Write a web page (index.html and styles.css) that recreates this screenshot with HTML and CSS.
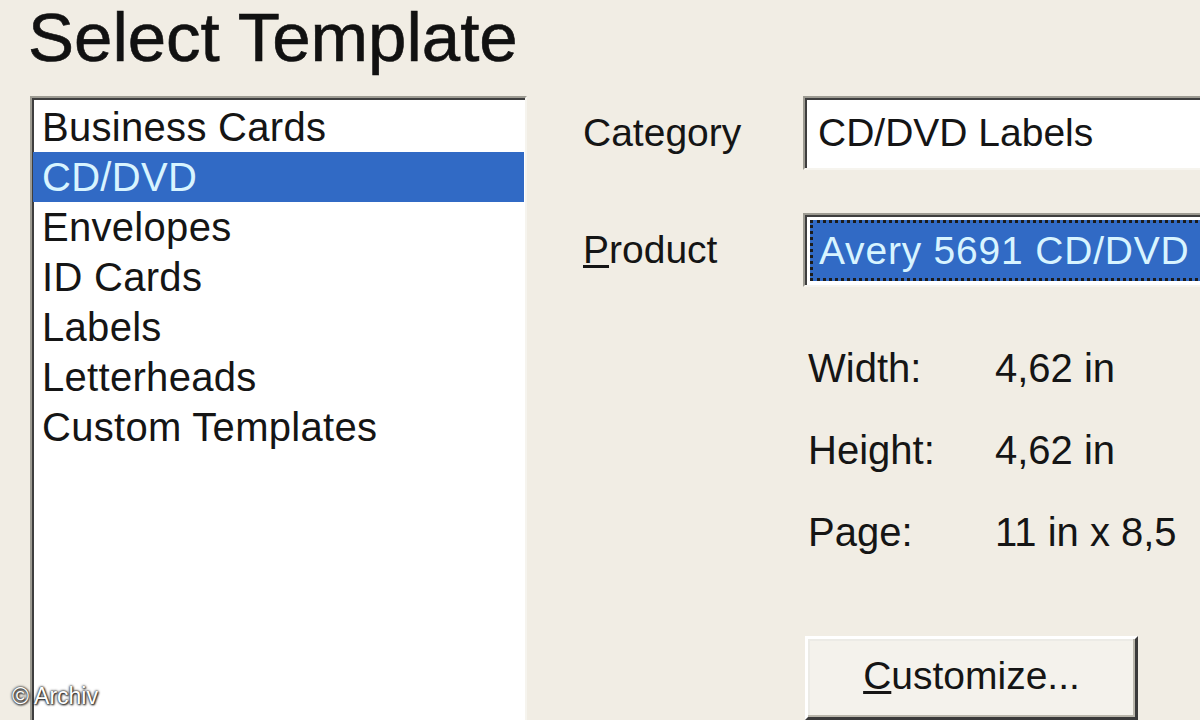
FILE: index.html
```html
<!DOCTYPE html>
<html lang="en">
<head>
    <meta charset="utf-8" />
    <meta name="viewport" content="width=device-width, initial-scale=1.0">
    <link rel="stylesheet" href="styles.css">
    <title>Select Template</title>
</head>
<body>
    <div class="dialog">
        <h1 class="title">Select Template</h1>

        <div class="main">
            <ul class="listbox">
                <li>Business Cards</li>
                <li class="selected">CD/DVD</li>
                <li>Envelopes</li>
                <li>ID Cards</li>
                <li>Labels</li>
                <li>Letterheads</li>
                <li>Custom Templates</li>
            </ul>

            <div class="panel">
                <div class="fields">
                    <label class="field-label">Category</label>
                    <div class="field">CD/DVD Labels</div>

                    <label class="field-label"><u>P</u>roduct</label>
                    <div class="field">
                        <span class="focus">Avery 5691 CD/DVD</span>
                    </div>
                </div>

                <div class="specs">
                    <span>Width:</span><span>4,62 in</span>
                    <span>Height:</span><span>4,62 in</span>
                    <span>Page:</span><span>11 in x 8,5</span>
                </div>

                <button class="customize" type="button"><u>C</u>ustomize...</button>
            </div>
        </div>

        <div class="credit">&copy; Archiv</div>
    </div>
</body>
</html>
```

FILE: styles.css
```css
body {
    margin: 0;
    background-color: #f1ede4;
    font-family: 'Liberation Sans', Arial, sans-serif;
    color: #151515;
    overflow: hidden;
}

.dialog {
    position: relative;
    width: 1200px;
    height: 720px;
    overflow: hidden;
}

.title {
    margin: 0;
    padding-left: 28px;
    font-size: 69px;
    font-weight: normal;
    line-height: 76px;
    color: #111;
    -webkit-text-stroke: 0.6px #111;
}

.main {
    display: flex;
    margin-top: 20px;
}

/* list on the left */
.listbox {
    list-style: none;
    margin: 0 0 0 30px;
    padding: 4px 0 0;
    width: 497px;
    height: 660px;
    box-sizing: border-box;
    background-color: #fff;
    border: 2px solid;
    border-color: #9d9b92 #f6f4ee #f6f4ee #9d9b92;
    box-shadow: inset 2px 2px 0 #3e3e3e;
    flex-shrink: 0;
}

.listbox li {
    height: 50px;
    line-height: 50px;
    padding-left: 9px;
    margin-left: 1px;
    margin-right: 1px;
    font-size: 40px;
    letter-spacing: 0.3px;
    white-space: nowrap;
}

.listbox li.selected {
    background-color: #316ac5;
    color: #d8f4ff;
}

/* right side */
.panel {
    margin-left: 56px;
    display: flex;
    flex-direction: column;
    align-items: flex-start;
}

.fields {
    display: grid;
    grid-template-columns: 220px 440px;
    row-gap: 43px;
    align-items: center;
}

.field-label {
    font-size: 39px;
}

.field {
    height: 74px;
    box-sizing: border-box;
    display: flex;
    align-items: center;
    padding: 0 6px 0 13px;
    font-size: 39px;
    background-color: #fff;
    border: 2px solid;
    border-color: #9d9b92 #f6f4ee #f6f4ee #9d9b92;
    box-shadow: inset 2px 2px 0 #3e3e3e;
    white-space: nowrap;
    overflow: hidden;
}

.field:has(.focus) {
    padding: 5px 0 4px 5px;
    align-items: stretch;
}

.focus {
    flex: 1;
    display: flex;
    align-items: center;
    padding-left: 6px;
    background-color: #316ac5;
    color: #d8f4ff;
    letter-spacing: 0.8px;
    border: 3px dotted #1c1c1c;
    border-right: none;
}

.specs {
    margin-top: 40px;
    margin-left: 225px;
    display: grid;
    grid-template-columns: 187px auto;
    grid-auto-rows: 82px;
    align-items: center;
    font-size: 40px;
    white-space: nowrap;
}

.customize {
    margin-top: 63px;
    margin-left: 222px;
    width: 333px;
    height: 84px;
    font-family: 'Liberation Sans', Arial, sans-serif;
    font-size: 39px;
    color: #151515;
    background-color: #f4f2ec;
    border: 3px solid;
    border-color: #ffffff #3a3a3a #3a3a3a #ffffff;
    box-shadow: inset -2px -2px 0 #b9b6ab, inset 2px 2px 0 #ecebe6;
    padding: 0 0 4px;
}

.credit {
    position: absolute;
    left: 12px;
    bottom: 10px;
    font-size: 23px;
    color: #fff;
    text-shadow: 0 0 3px #222, 0 0 2px #222, 1px 1px 2px #222;
}
```
